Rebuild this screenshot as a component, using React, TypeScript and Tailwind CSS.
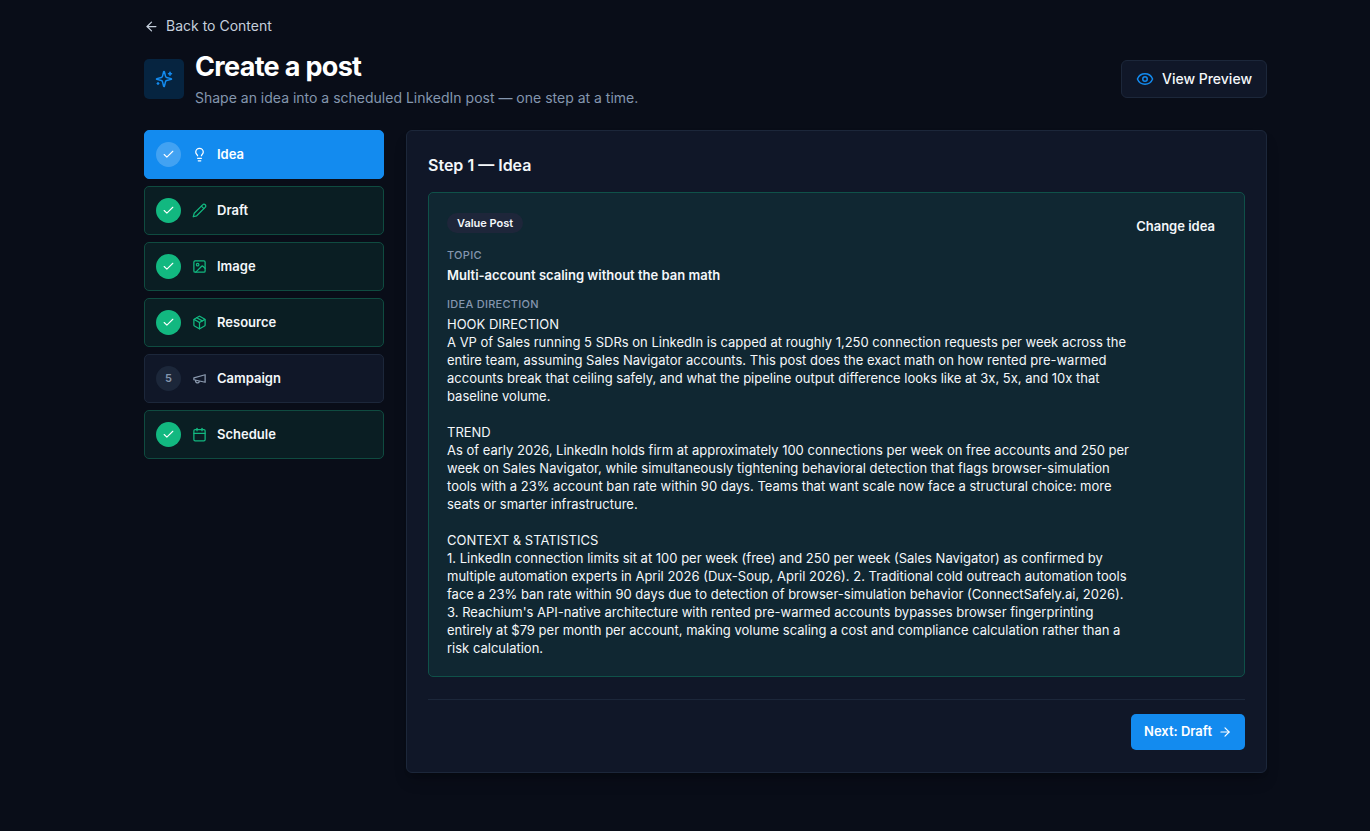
import React, { useState } from 'react'
import { ArrowLeft, ArrowRight, Calendar, Check, Eye, Image, Lightbulb, Package } from 'lucide-react'
import clsx from 'clsx'

interface IconProps {
    size?: number
    className?: string
}

interface Step {
    label: string
    icon: React.ComponentType<IconProps>
    done: boolean
}

const Outline: React.FC<IconProps & { children: React.ReactNode }> = ({ size = 24, className, children }) => (
    <svg
        width={size}
        height={size}
        viewBox="0 0 24 24"
        fill="none"
        stroke="currentColor"
        strokeWidth={2}
        strokeLinecap="round"
        strokeLinejoin="round"
        className={className}
        aria-hidden="true"
    >
        {children}
    </svg>
)

const Pencil: React.FC<IconProps> = (props) => (
    <Outline {...props}>
        <path d="M17 3a2.85 2.83 0 1 1 4 4L7.5 20.5 2 22l1.5-5.5Z" />
        <path d="m15 5 4 4" />
    </Outline>
)

const Megaphone: React.FC<IconProps> = (props) => (
    <Outline {...props}>
        <path d="m3 11 18-5v12L3 14v-3z" />
        <path d="M11.6 16.8a3 3 0 1 1-5.8-1.6" />
    </Outline>
)

const Sparkles: React.FC<IconProps> = (props) => (
    <Outline {...props}>
        <path d="M9.937 15.5A2 2 0 0 0 8.5 14.063l-6.135-1.582a.5.5 0 0 1 0-.962L8.5 9.936A2 2 0 0 0 9.937 8.5l1.582-6.135a.5.5 0 0 1 .963 0L14.063 8.5A2 2 0 0 0 15.5 9.937l6.135 1.581a.5.5 0 0 1 0 .964L15.5 14.063a2 2 0 0 0-1.437 1.437l-1.582 6.135a.5.5 0 0 1-.963 0z" />
        <path d="M20 3v4" />
        <path d="M22 5h-4" />
        <path d="M4 17v2" />
        <path d="M5 18H3" />
    </Outline>
)

const steps: Step[] = [
    { label: 'Idea', icon: Lightbulb, done: true },
    { label: 'Draft', icon: Pencil, done: true },
    { label: 'Image', icon: Image, done: true },
    { label: 'Resource', icon: Package, done: true },
    { label: 'Campaign', icon: Megaphone, done: false },
    { label: 'Schedule', icon: Calendar, done: true },
]

const direction = `HOOK DIRECTION
A VP of Sales running 5 SDRs on LinkedIn is capped at roughly 1,250 connection requests per week across the entire team, assuming Sales Navigator accounts. This post does the exact math on how rented pre-warmed accounts break that ceiling safely, and what the pipeline output difference looks like at 3x, 5x, and 10x that baseline volume.

TREND
As of early 2026, LinkedIn holds firm at approximately 100 connections per week on free accounts and 250 per week on Sales Navigator, while simultaneously tightening behavioral detection that flags browser-simulation tools with a 23% account ban rate within 90 days. Teams that want scale now face a structural choice: more seats or smarter infrastructure.

CONTEXT & STATISTICS
1. LinkedIn connection limits sit at 100 per week (free) and 250 per week (Sales Navigator) as confirmed by multiple automation experts in April 2026 (Dux-Soup, April 2026). 2. Traditional cold outreach automation tools face a 23% ban rate within 90 days due to detection of browser-simulation behavior (ConnectSafely.ai, 2026). 3. Reachium's API-native architecture with rented pre-warmed accounts bypasses browser fingerprinting entirely at $79 per month per account, making volume scaling a cost and compliance calculation rather than a risk calculation.`

const StepButton: React.FC<{ step: Step, index: number, active: boolean, onClick: () => void }> = ({ step, index, active, onClick }) => {
    const Icon = step.icon

    return (
        <button
            onClick={onClick}
            className={clsx(
                'flex w-full items-center rounded-[5px] border px-[11px] py-[11px] text-left cursor-pointer',
                active && 'border-[#138bef] bg-[#138bef]',
                !active && step.done && 'border-[#0f4b40] bg-[#0a1e23]',
                !active && !step.done && 'border-[#1c273a] bg-[#101728]'
            )}
        >
            <span
                className={clsx(
                    'flex size-[25px] items-center justify-center rounded-full text-[11px] font-semibold',
                    active && 'bg-white/20 text-white',
                    !active && step.done && 'bg-[#12b880] text-white',
                    !active && !step.done && 'bg-[#1c273a] text-[#8496ae]'
                )}
            >
                {step.done ? <Check size={13} /> : index + 1}
            </span>
            <Icon
                size={15}
                className={clsx('ml-[11px] shrink-0', active ? 'text-white' : step.done ? 'text-[#12b880]' : 'text-[#8c9bb0]')}
            />
            <span className={clsx('ml-[10px] pb-[2px] text-[13px] leading-[18px] font-semibold', active ? 'text-white' : 'text-[#f4f7fa]')}>{step.label}</span>
        </button>
    )
}

export default function App() {
    const [current, setCurrent] = useState(0)

    return (
        <div className="min-h-screen bg-[#090d18] pl-[41px] font-['Inter',sans-serif] text-[#f4f7fa]">
            <main className="mx-auto max-w-[1123px] pt-4 pb-14">
                <a href="#content" className="flex w-fit items-center gap-[7px] text-[14px] leading-5 text-[#c5cfdc]">
                    <ArrowLeft size={15} />
                    Back to Content
                </a>

                <header className="mt-[13px] flex items-center justify-between">
                    <div className="flex items-center gap-[11px]">
                        <div className="flex size-10 items-center justify-center rounded-[5px] bg-[#062440] text-[#138bef]">
                            <Sparkles size={18} />
                        </div>
                        <div>
                            <h1 className="text-[27px] leading-9 font-bold tracking-tight text-white">Create a post</h1>
                            <p className="mt-[3px] text-[14px] leading-5 text-[#8496ae]">Shape an idea into a scheduled LinkedIn post — one step at a time.</p>
                        </div>
                    </div>
                    <button className="flex h-[38px] items-center gap-2 rounded-md border border-[#1c273a] bg-[#101728] px-[14px] text-[14px] font-medium cursor-pointer">
                        <Eye size={18} className="text-[#138bef]" />
                        View Preview
                    </button>
                </header>

                <div className="mt-[22px] flex items-start gap-[22px]">
                    <nav className="flex w-60 shrink-0 flex-col gap-[7px]">
                        {steps.map((step, i) => (
                            <StepButton key={step.label} step={step} index={i} active={i === current} onClick={() => setCurrent(i)} />
                        ))}
                    </nav>

                    <section className="flex-1 rounded-md border border-[#1c273a] bg-[#101728] px-[21px] pt-[22px] pb-[22px] shadow-lg shadow-black/20">
                        <h2 className="text-[16px] leading-6 font-semibold">Step 1 — Idea</h2>

                        <div className="mt-[15px] flex items-start justify-between rounded-[5px] border border-[#0f5149] bg-[#102732] px-[18px] pt-[18px] pb-[19px]">
                            <div className="max-w-[690px]">
                                <span className="mt-[2px] flex h-5 w-fit items-center rounded-full bg-[#1e263a] px-[10px] text-[11px] font-semibold">Value Post</span>
                                <p className="mt-[14px] text-[11px] leading-4 font-medium tracking-wide text-[#8496ae]">TOPIC</p>
                                <p className="mt-[3px] text-[13px] leading-[18px] font-semibold">Multi-account scaling without the ban math</p>
                                <p className="mt-3 text-[11px] leading-4 font-medium tracking-wide text-[#8496ae]">IDEA DIRECTION</p>
                                <p className="mt-[3px] text-[13px] leading-[18px] whitespace-pre-wrap">{direction}</p>
                            </div>
                            <button className="mr-[11px] shrink-0 py-[6px] text-[13px] leading-[18px] font-semibold whitespace-nowrap cursor-pointer">Change idea</button>
                        </div>

                        <div className="mt-[22px] flex justify-end border-t border-[#1c273a] pt-[14px]">
                            <button
                                className="flex h-9 items-center gap-[6px] rounded-[5px] bg-[#138bef] px-[13px] text-[13px] font-semibold text-white cursor-pointer"
                                onClick={() => setCurrent(1)}
                            >
                                Next: Draft
                                <ArrowRight size={14} />
                            </button>
                        </div>
                    </section>
                </div>
            </main>
        </div>
    )
}
